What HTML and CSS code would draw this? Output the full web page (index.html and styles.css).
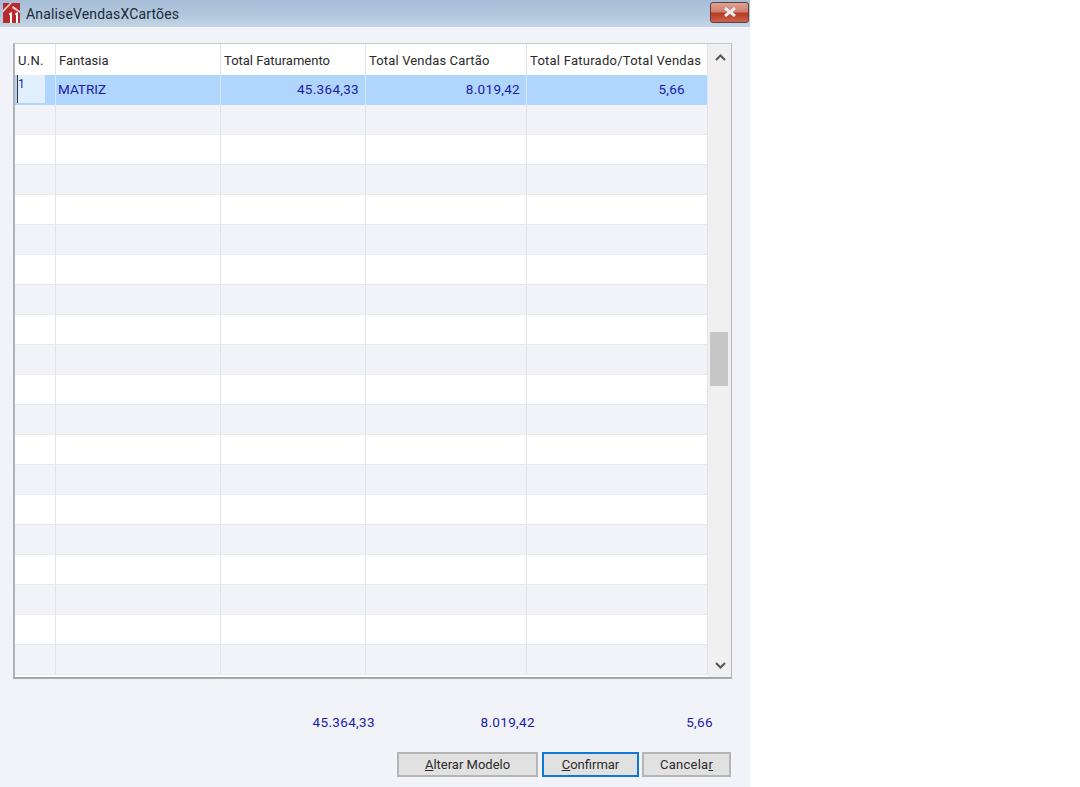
FILE: index.html
```html
<!DOCTYPE html>
<html lang="pt">
<head>
<meta charset="utf-8">
<title>AnaliseVendasXCartões</title>
<link rel="stylesheet" href="styles.css">
</head>
<body>
<div class="window">
  <div class="titlebar">
    <svg class="logo" width="17" height="20" viewBox="0 0 17 20">
      <rect width="17" height="20" fill="#b72a2e"/>
      <path d="M0 7 L7 0 L9 0 L0 9.500Z" fill="#f2cfcb"/>
      <path d="M10 3 L17 8 L17 10 L9 5Z" fill="#f2cfcb"/>
      <path d="M6.500 10 L9 9 L9 20 L7 20 L7 12 L6 12Z M12.500 10 L15 9 L15 20 L13 20 L13 12 L12 12Z" fill="#fff"/>
    </svg>
    <span class="title">AnaliseVendasXCartões</span>
    <div class="close">
      <svg width="14" height="10" viewBox="0 0 14 10">
        <path d="M2 1 L12 9 M12 1 L2 9" stroke="#e9e9ee" stroke-width="3" fill="none"/>
      </svg>
    </div>
  </div>
  <div class="content">
    <div class="grid-frame">
      <div class="grid">
        <div class="row head">
          <div class="cell c1">U.N.</div><div class="cell c2">Fantasia</div><div class="cell c3">Total Faturamento</div><div class="cell c4">Total Vendas Cartão</div><div class="cell c5">Total Faturado/Total Vendas</div>
        </div>
        <div class="row selected">
          <div class="cell c1"><span class="editor">1</span></div><div class="cell c2">MATRIZ</div><div class="cell c3 num">45.364,33</div><div class="cell c4 num">8.019,42</div><div class="cell c5 num last">5,66</div>
        </div>
        <div class="row alt"><div class="cell c1"></div><div class="cell c2"></div><div class="cell c3"></div><div class="cell c4"></div><div class="cell c5"></div></div>
        <div class="row"><div class="cell c1"></div><div class="cell c2"></div><div class="cell c3"></div><div class="cell c4"></div><div class="cell c5"></div></div>
        <div class="row alt"><div class="cell c1"></div><div class="cell c2"></div><div class="cell c3"></div><div class="cell c4"></div><div class="cell c5"></div></div>
        <div class="row"><div class="cell c1"></div><div class="cell c2"></div><div class="cell c3"></div><div class="cell c4"></div><div class="cell c5"></div></div>
        <div class="row alt"><div class="cell c1"></div><div class="cell c2"></div><div class="cell c3"></div><div class="cell c4"></div><div class="cell c5"></div></div>
        <div class="row"><div class="cell c1"></div><div class="cell c2"></div><div class="cell c3"></div><div class="cell c4"></div><div class="cell c5"></div></div>
        <div class="row alt"><div class="cell c1"></div><div class="cell c2"></div><div class="cell c3"></div><div class="cell c4"></div><div class="cell c5"></div></div>
        <div class="row"><div class="cell c1"></div><div class="cell c2"></div><div class="cell c3"></div><div class="cell c4"></div><div class="cell c5"></div></div>
        <div class="row alt"><div class="cell c1"></div><div class="cell c2"></div><div class="cell c3"></div><div class="cell c4"></div><div class="cell c5"></div></div>
        <div class="row"><div class="cell c1"></div><div class="cell c2"></div><div class="cell c3"></div><div class="cell c4"></div><div class="cell c5"></div></div>
        <div class="row alt"><div class="cell c1"></div><div class="cell c2"></div><div class="cell c3"></div><div class="cell c4"></div><div class="cell c5"></div></div>
        <div class="row"><div class="cell c1"></div><div class="cell c2"></div><div class="cell c3"></div><div class="cell c4"></div><div class="cell c5"></div></div>
        <div class="row alt"><div class="cell c1"></div><div class="cell c2"></div><div class="cell c3"></div><div class="cell c4"></div><div class="cell c5"></div></div>
        <div class="row"><div class="cell c1"></div><div class="cell c2"></div><div class="cell c3"></div><div class="cell c4"></div><div class="cell c5"></div></div>
        <div class="row alt"><div class="cell c1"></div><div class="cell c2"></div><div class="cell c3"></div><div class="cell c4"></div><div class="cell c5"></div></div>
        <div class="row"><div class="cell c1"></div><div class="cell c2"></div><div class="cell c3"></div><div class="cell c4"></div><div class="cell c5"></div></div>
        <div class="row alt"><div class="cell c1"></div><div class="cell c2"></div><div class="cell c3"></div><div class="cell c4"></div><div class="cell c5"></div></div>
        <div class="row"><div class="cell c1"></div><div class="cell c2"></div><div class="cell c3"></div><div class="cell c4"></div><div class="cell c5"></div></div>
        <div class="row alt"><div class="cell c1"></div><div class="cell c2"></div><div class="cell c3"></div><div class="cell c4"></div><div class="cell c5"></div></div>
      </div>
      <div class="scrollbar">
        <svg class="arrow" width="11" height="7" viewBox="0 0 11 7"><path d="M1 6 L5.500 1.500 L10 6" fill="none" stroke="#555" stroke-width="2"/></svg>
        <div class="track"><div class="thumb"></div></div>
        <svg class="arrow" width="11" height="7" viewBox="0 0 11 7"><path d="M1 1 L5.500 5.500 L10 1" fill="none" stroke="#555" stroke-width="2"/></svg>
      </div>
    </div>
    <div class="totals">
      <span class="total t1">45.364,33</span><span class="total t2">8.019,42</span><span class="total t3">5,66</span>
    </div>
    <div class="actions">
      <button class="btn b1"><u>A</u>lterar Modelo</button>
      <button class="btn b2 primary"><u>C</u>onfirmar</button>
      <button class="btn b3">Cancela<u>r</u></button>
    </div>
  </div>
</div>
</body>
</html>
```
FILE: styles.css
```css
* { box-sizing: border-box; }
html, body { margin: 0; padding: 0; background: #fff; }
body { width: 1080px; height: 787px; overflow: hidden; font-family: "Roboto", "Liberation Sans", sans-serif; font-size: 13.5px; color: #2a2a2a; }
.window { width: 750px; height: 787px; background: #f1f3f9; display: flex; flex-direction: column; }
.titlebar { height: 27px; flex: none; display: flex; align-items: center; padding: 0 1px 0 3px; background: linear-gradient(180deg, #a5bdd6 0%, #b2c8dd 60%, #c4d6e6 100%); }
.logo { flex: none; margin-top: -1px; }
.title { margin-left: 6px; font-size: 14px; color: #1c2a38; letter-spacing: 0.15px; }
.close { margin-left: auto; margin-top: -3px; width: 39px; height: 21px; display: flex; align-items: center; justify-content: center; border: 1px solid #6b3a3a; border-radius: 3px; background: linear-gradient(180deg, #dca394 0%, #cf7f6c 45%, #b83a22 55%, #c9654f 100%); }
.content { flex: 1; display: flex; flex-direction: column; padding: 16px 18px 0 13px; }
.grid-frame { width: 719px; height: 636px; display: flex; background: #fff; border-style: solid; border-width: 1px 1px 2px 2px; border-color: #c9cace #b4b6ba #a4a6ab #b0b2b6; }
.grid { width: 693px; flex: none; }
.row { display: flex; height: 30px; background: #fff; border-bottom: 1px solid #e8e9eb; }
.row.head { height: 31px; border-bottom: 0; align-items: stretch; font-size: 13px; }
.row.alt { background: #f1f3f9; }
.row.selected { background: #b1d6fe; color: #1b1ba8; border-bottom: 0; height: 30px; }
.cell { height: 100%; border-right: 1px solid #e2e3e6; padding: 0 2px; display: flex; align-items: center; white-space: nowrap; }
.head .cell { padding: 1px 3px 0; color: #2a2a2a; }
.selected .cell { border-right-color: #d6e8fb; padding-bottom: 2px; }
.selected .c1 { padding: 0 0 0 2px; align-items: flex-start; }
.c1 { width: 41px; }
.c2 { width: 165px; }
.c3 { width: 145px; }
.c4 { width: 161px; }
.c5 { width: 181px; }
.head .c1 { letter-spacing: 0.3px; }
.head .c4 { letter-spacing: 0.15px; }
.head .c5 { letter-spacing: 0.25px; }
.num { justify-content: flex-end; letter-spacing: 0.3px; }
.selected .num { padding-right: 6px; }
.selected .num.last { padding-right: 22px; }
.editor { display: block; width: 28px; height: 28px; background: #e2effe; border-left: 1px solid #333; padding-top: 0; line-height: 18px; font-size: 12px; color: #1b1ba8; }
.scrollbar { flex: 1; background: #f0f0f0; display: flex; flex-direction: column; align-items: center; padding: 10px 0 8px 1px; }
.track { flex: 1; width: 100%; padding: 271px 3px 0 1px; }
.thumb { height: 54px; background: #c6c6c6; }
.totals { display: flex; height: 47px; margin-top: 26px; color: #1b1ba8; letter-spacing: 0.35px; align-items: flex-start; }
.total { display: block; text-align: right; line-height: 34px; height: 34px; }
.t1 { width: 362px; }
.t2 { width: 160px; }
.t3 { width: 178px; }
.actions { display: flex; padding-left: 384px; height: 25px; }
.btn { height: 25px; padding: 0; font: inherit; font-size: 13px; color: #2a2a2a; background: #e1e1e1; border: 2px solid #b5b5b5; }
.b1 { width: 141px; }
.b2 { width: 97px; margin-left: 4px; }
.b3 { width: 89px; margin-left: 3px; letter-spacing: 0.25px; }
.primary { border-color: #0f78d4; }
```
